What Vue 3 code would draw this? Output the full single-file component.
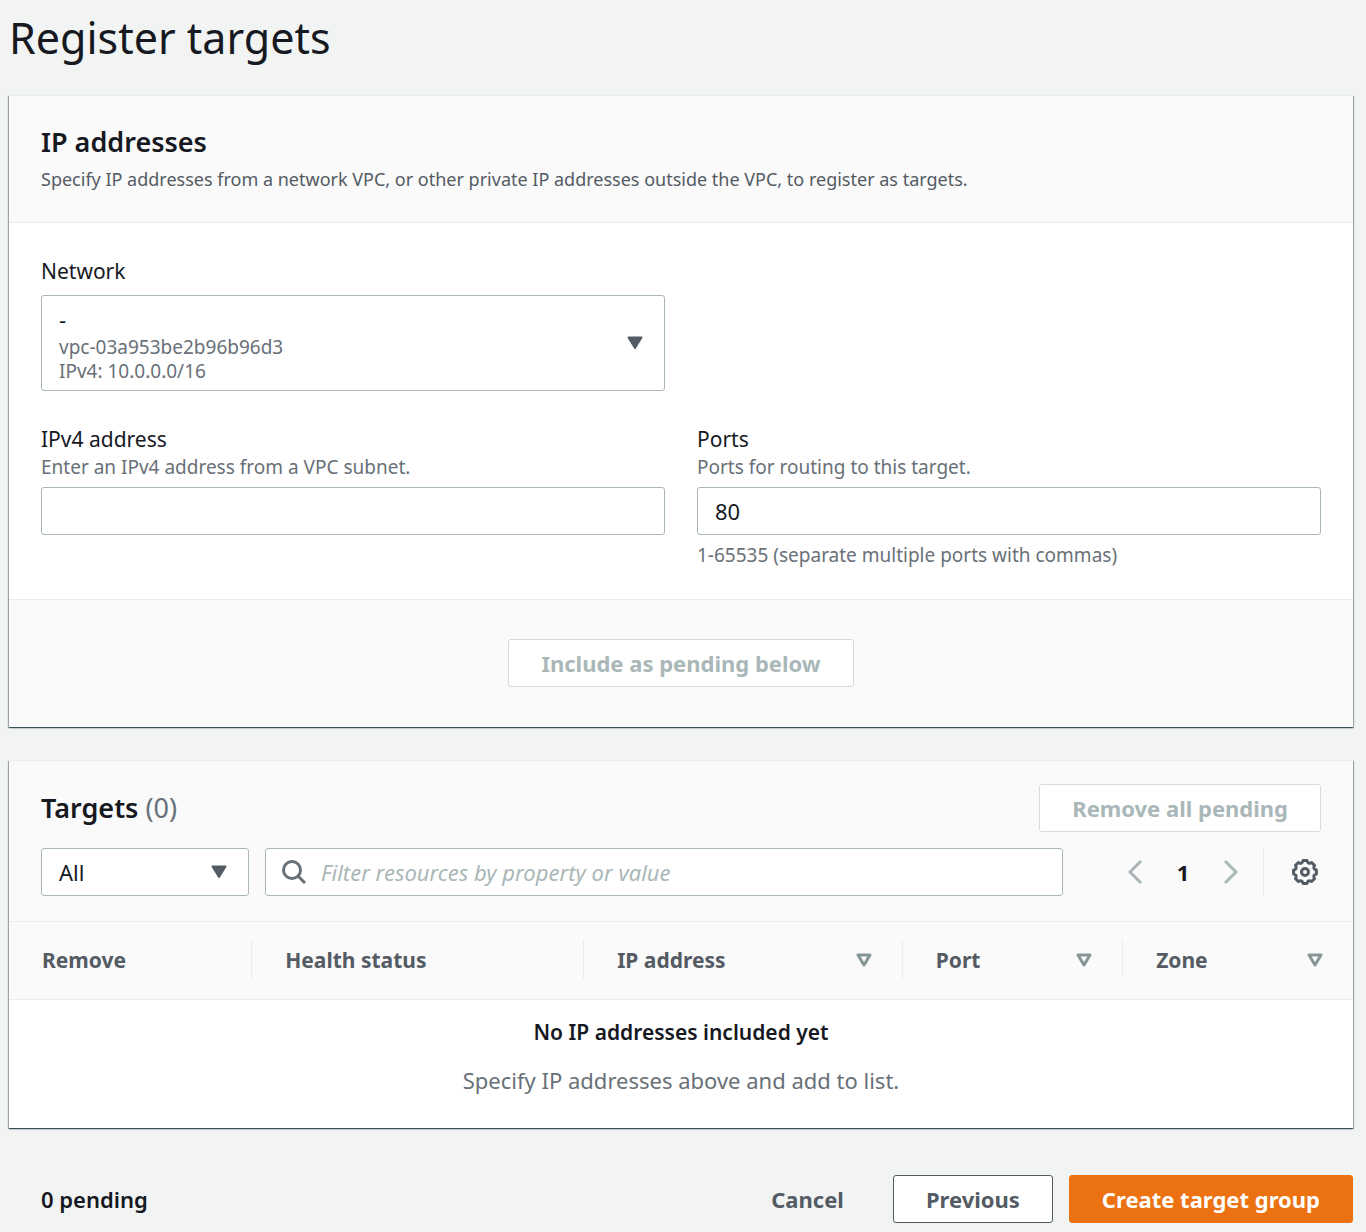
<script setup>
import { ref } from 'vue'

const network = ref('vpc-03a953be2b96b96d3')
const address = ref('')
const ports = ref('80')
const status = ref('All')
const filter = ref('')

const columns = [
  { label: 'Remove', sortable: false, width: '18.1%' },
  { label: 'Health status', sortable: false, width: '24.7%' },
  { label: 'IP address', sortable: true, width: '23.7%' },
  { label: 'Port', sortable: true, width: '16.4%' },
  { label: 'Zone', sortable: true, width: '17.1%' },
]
</script>

<template>
  <main class="page">
    <h1 class="title">Register targets</h1>

    <section class="card">
      <header class="card-header">
        <h2 class="heading">IP addresses</h2>
        <p class="description">
          Specify IP addresses from a network VPC, or other private IP addresses outside the VPC, to register as targets.
        </p>
      </header>

      <div class="form">
        <div class="field">
          <label class="label network-label" for="network">Network</label>
          <div class="select network">
            <select id="network" v-model="network" class="control">
              <option value="vpc-03a953be2b96b96d3">vpc-03a953be2b96b96d3</option>
            </select>
            <div class="network-text">
              <span class="network-name">-</span>
              <span>vpc-03a953be2b96b96d3</span>
              <span>IPv4: 10.0.0.0/16</span>
            </div>
            <svg class="caret" viewBox="0 0 16 14" aria-hidden="true">
              <path d="M1.5 1.5h13L8 12z" />
            </svg>
          </div>
        </div>

        <div class="field first">
          <label class="label" for="address">IPv4 address</label>
          <p class="hint">Enter an IPv4 address from a VPC subnet.</p>
          <input id="address" v-model="address" class="control" type="text" />
        </div>
        <div class="field">
          <label class="label" for="ports">Ports</label>
          <p class="hint">Ports for routing to this target.</p>
          <input id="ports" v-model="ports" class="control" type="text" />
          <p class="hint constraint">1-65535 (separate multiple ports with commas)</p>
        </div>
      </div>

      <footer class="card-footer">
        <button class="button" type="button" disabled>Include as pending below</button>
      </footer>
    </section>

    <section class="card">
      <header class="targets-header">
        <div class="row">
          <h2 class="heading">Targets <span class="count">(0)</span></h2>
          <button class="button" type="button" disabled>Remove all pending</button>
        </div>
        <div class="row">
          <div class="filters">
            <div class="select status">
              <select v-model="status" class="control" aria-label="Status">
                <option>All</option>
              </select>
              <svg class="caret" viewBox="0 0 16 14" aria-hidden="true">
                <path d="M1.5 1.5h13L8 12z" />
              </svg>
            </div>
            <div class="search">
              <svg class="search-icon" viewBox="0 0 24 24" aria-hidden="true">
                <circle cx="10" cy="10" r="8.5" />
                <path d="M16 16l7 7" />
              </svg>
              <input
                v-model="filter"
                class="control"
                type="text"
                aria-label="Filter resources"
                placeholder="Filter resources by property or value"
              />
            </div>
          </div>
          <div class="tools">
            <nav class="pagination" aria-label="Pagination">
              <button class="icon-button" type="button" aria-label="Previous page" disabled>
                <svg class="chevron" viewBox="0 0 16 26" aria-hidden="true"><path d="M14 2L3 13l11 11" /></svg>
              </button>
              <button class="icon-button current" type="button">1</button>
              <button class="icon-button" type="button" aria-label="Next page" disabled>
                <svg class="chevron" viewBox="0 0 16 26" aria-hidden="true"><path d="M2 2l11 11L2 24" /></svg>
              </button>
            </nav>
            <button class="icon-button settings" type="button" aria-label="Preferences">
              <svg class="gear" viewBox="-13 -13 26 26" aria-hidden="true">
                <path
                  d="M11.4-2V2Q7.4 3 9.5 6.6L6.6 9.5Q3 7.4 2 11.4H-2Q-3 7.4-6.6 9.5L-9.5 6.6Q-7.4 3-11.4 2V-2Q-7.4-3-9.5-6.6L-6.6-9.5Q-3-7.4-2-11.4H2Q3-7.4 6.6-9.5L9.5-6.6Q7.4-3 11.4-2Z"
                />
                <circle r="3.5" />
              </svg>
            </button>
          </div>
        </div>
      </header>

      <table class="table">
        <colgroup>
          <col v-for="column in columns" :key="column.label" :style="{ width: column.width }" />
        </colgroup>
        <thead>
          <tr>
            <th v-for="column in columns" :key="column.label" scope="col">
              <div class="th-content">
                {{ column.label }}
                <svg v-if="column.sortable" class="sort" viewBox="0 0 16 14" aria-hidden="true">
                  <path d="M2 2h12L8 12z" />
                </svg>
              </div>
            </th>
          </tr>
        </thead>
        <tbody>
          <tr>
            <td :colspan="columns.length">
              <p class="empty-title">No IP addresses included yet</p>
              <p class="empty-text">Specify IP addresses above and add to list.</p>
            </td>
          </tr>
        </tbody>
      </table>
    </section>

    <footer class="actions">
      <strong class="pending">0 pending</strong>
      <button class="button link" type="button">Cancel</button>
      <button class="button normal" type="button">Previous</button>
      <button class="button primary" type="button">Create target group</button>
    </footer>
  </main>
</template>

<style>
body {
  margin: 0;
  background: #f2f4f4;
}
</style>

<style scoped>
.page {
  padding: 6px 13px 8px 9px;
  color: #16191f;
  font-family: 'Noto Sans', 'Open Sans', sans-serif;
  font-size: 22px;
  line-height: 32px;
}

.page *,
.page *::before {
  box-sizing: border-box;
}

h1,
h2,
p {
  margin: 0;
}

.title {
  margin-bottom: 25px;
  font-size: 43px;
  font-weight: 400;
  line-height: 64px;
}

.card {
  margin-bottom: 33px;
  background: #fff;
  border-top: 1px solid #eaeded;
  box-shadow: 0 1px 1px 0 rgba(0, 28, 36, 0.5), 1px 1px 1px 0 rgba(0, 28, 36, 0.3), -1px 1px 1px 0 rgba(0, 28, 36, 0.3);
}

.card-header {
  padding: 28px 32px;
  background: #fafafa;
  border-bottom: 1px solid #eaeded;
}

.heading {
  font-size: 27px;
  font-weight: 600;
  line-height: 36px;
}

.card-header .heading {
  margin-bottom: 4px;
}

.description {
  color: #545b64;
  font-size: 18px;
  line-height: 30px;
}

.form {
  display: grid;
  grid-template-columns: 1fr 1fr;
  gap: 32px;
  padding: 32px;
}

.field {
  display: flex;
  flex-direction: column;
}

.first {
  grid-column: 1;
}

.label {
  font-size: 21px;
  line-height: 32px;
}

.network-label {
  margin-bottom: 8px;
}

.hint {
  margin-bottom: 8px;
  color: #687078;
  font-size: 19px;
  line-height: 24px;
}

.constraint {
  margin: 8px 0 0;
}

.control {
  width: 100%;
  height: 48px;
  padding: 0 17px;
  background: #fff;
  border: 1px solid #aab7b8;
  border-radius: 3px;
  color: #16191f;
  font: inherit;
  appearance: none;
}

.control::placeholder {
  color: #aab7b8;
  font-style: italic;
  opacity: 1;
}

.select {
  display: grid;
  align-items: center;
}

.select > * {
  grid-area: 1 / 1;
}

.network .control {
  height: 96px;
  color: transparent;
}

.network-text {
  display: flex;
  flex-direction: column;
  padding: 0 18px;
  color: #687078;
  font-size: 19px;
  line-height: 24px;
  pointer-events: none;
}

.network-name {
  color: #16191f;
  font-size: 22px;
  line-height: 32px;
}

.caret {
  justify-self: end;
  width: 16px;
  height: 14px;
  margin-right: 22px;
  fill: #545b64;
  stroke: #545b64;
  stroke-linejoin: round;
  stroke-width: 2;
  pointer-events: none;
}

.card-footer {
  display: flex;
  justify-content: center;
  padding: 39px 32px 40px;
  background: #fafafa;
  border-top: 1px solid #eaeded;
}

.button {
  height: 48px;
  padding: 0 32px;
  background: #fff;
  border: 1px solid #545b64;
  border-radius: 3px;
  color: #545b64;
  font: inherit;
  font-weight: 700;
  white-space: nowrap;
}

.button:disabled {
  border-color: #d5dbdb;
  color: #aab7b8;
}

.targets-header {
  display: flex;
  flex-direction: column;
  gap: 16px;
  padding: 23px 32px 25px;
  background: #fafafa;
  border-bottom: 1px solid #eaeded;
}

.row {
  display: flex;
  align-items: center;
  justify-content: space-between;
}

.count {
  color: #687078;
  font-weight: 400;
}

.filters {
  display: flex;
  flex: 1;
  gap: 16px;
}

.status {
  width: 208px;
}

.search {
  display: grid;
  flex: 1;
  align-items: center;
}

.search > * {
  grid-area: 1 / 1;
}

.search .control {
  padding-left: 55px;
}

.search-icon {
  z-index: 1;
  width: 24px;
  height: 24px;
  margin-left: 17px;
  fill: none;
  stroke: #687078;
  stroke-width: 3;
}

.tools {
  display: flex;
  width: 258px;
  justify-content: flex-end;
}

.pagination {
  display: flex;
  padding-right: 8px;
  border-right: 1px solid #eaeded;
}

.icon-button {
  display: flex;
  align-items: center;
  justify-content: center;
  width: 48px;
  height: 48px;
  padding: 0;
  background: none;
  border: 0;
  color: #16191f;
  font: inherit;
}

.current {
  font-weight: 700;
}

.settings {
  justify-content: flex-end;
  width: 57px;
  padding-right: 3px;
}

.chevron {
  width: 16px;
  height: 26px;
  fill: none;
  stroke: #aab7b8;
  stroke-width: 3;
}

.gear {
  width: 26px;
  height: 26px;
  fill: none;
  stroke: #545b64;
  stroke-linejoin: round;
  stroke-width: 3;
}

.table {
  width: 100%;
  border-collapse: collapse;
  table-layout: fixed;
}

th {
  padding: 18px 0 20px;
  background: #fafafa;
  border-bottom: 1px solid #eaeded;
  color: #545b64;
  font-size: 21px;
  font-weight: 700;
  text-align: left;
}

.th-content {
  display: flex;
  align-items: center;
  justify-content: space-between;
  height: 39px;
  padding: 0 30px 0 33px;
  border-right: 1px solid #eaeded;
}

th:last-child .th-content {
  border-right: 0;
}

.sort {
  width: 16px;
  height: 14px;
  fill: none;
  stroke: #879596;
  stroke-linejoin: round;
  stroke-width: 3;
}

td {
  padding: 16px 32px 32px;
  text-align: center;
}

.empty-title {
  margin-bottom: 16px;
  font-size: 21px;
  font-weight: 600;
}

.empty-text {
  color: #687078;
}

.actions {
  display: flex;
  align-items: center;
  margin-top: 47px;
}

.pending {
  margin: 0 auto 0 32px;
  font-weight: 600;
}

.link {
  margin-right: 16px;
  background: none;
  border-color: transparent;
}

.normal {
  margin-right: 16px;
}

.primary {
  background: #ec7211;
  border-color: #ec7211;
  color: #fff;
}
</style>
